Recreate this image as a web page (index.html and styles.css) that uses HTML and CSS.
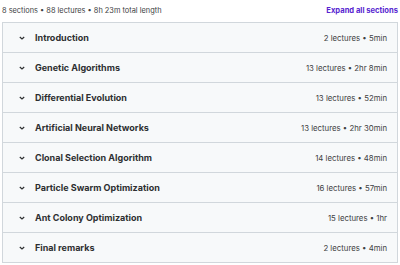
FILE: index.html
```html
<!DOCTYPE html>
<html lang="en">
<head>
    <meta charset="UTF-8">
    <title>Course content</title>
    <link rel="stylesheet" href="styles.css">
</head>
<body>
    <div class="content">
        <div class="summary">
            <span>8 sections • 88 lectures • 8h 23m total length</span>
            <span class="expand">Expand all sections</span>
        </div>
        <div class="sections">
            <div class="section">
                <svg class="chev" viewBox="0 0 10 10"><path d="M2.8 4 L5 6 L7.2 4"/></svg>
                <span class="title">Introduction</span>
                <span class="meta">2 lectures • 5min</span>
            </div>
            <div class="section">
                <svg class="chev" viewBox="0 0 10 10"><path d="M2.8 4 L5 6 L7.2 4"/></svg>
                <span class="title">Genetic Algorithms</span>
                <span class="meta">13 lectures • 2hr 8min</span>
            </div>
            <div class="section">
                <svg class="chev" viewBox="0 0 10 10"><path d="M2.8 4 L5 6 L7.2 4"/></svg>
                <span class="title">Differential Evolution</span>
                <span class="meta">13 lectures • 52min</span>
            </div>
            <div class="section">
                <svg class="chev" viewBox="0 0 10 10"><path d="M2.8 4 L5 6 L7.2 4"/></svg>
                <span class="title">Artificial Neural Networks</span>
                <span class="meta">13 lectures • 2hr 30min</span>
            </div>
            <div class="section">
                <svg class="chev" viewBox="0 0 10 10"><path d="M2.8 4 L5 6 L7.2 4"/></svg>
                <span class="title">Clonal Selection Algorithm</span>
                <span class="meta">14 lectures • 48min</span>
            </div>
            <div class="section">
                <svg class="chev" viewBox="0 0 10 10"><path d="M2.8 4 L5 6 L7.2 4"/></svg>
                <span class="title">Particle Swarm Optimization</span>
                <span class="meta">16 lectures • 57min</span>
            </div>
            <div class="section">
                <svg class="chev" viewBox="0 0 10 10"><path d="M2.8 4 L5 6 L7.2 4"/></svg>
                <span class="title">Ant Colony Optimization</span>
                <span class="meta">15 lectures • 1hr</span>
            </div>
            <div class="section">
                <svg class="chev" viewBox="0 0 10 10"><path d="M2.8 4 L5 6 L7.2 4"/></svg>
                <span class="title">Final remarks</span>
                <span class="meta">2 lectures • 4min</span>
            </div>
        </div>
    </div>
</body>
</html>
```

FILE: styles.css
```css
body {
    margin: 0;
    background-color: white;
    font-family: Inter, "Noto Sans", sans-serif;
    color: #2d2f31;
}

.content {
    padding: 2px 2px 0 2px;
}

.summary {
    display: flex;
    justify-content: space-between;
    align-items: center;
    height: 17px;
    font-size: 7.4px;
    color: #3e4143;
    padding-bottom: 3px;
}

.expand {
    color: #5624d0;
    font-weight: 700;
    font-size: 7.6px;
}

.sections {
    border: 1px solid #d1d7dc;
}

.section {
    display: flex;
    align-items: center;
    height: 29px;
    padding: 0 10px 0 14px;
    background-color: #f7f9fa;
    border-bottom: 1px solid #d1d7dc;
}

.section:last-child {
    border-bottom: none;
}

.chev {
    width: 10px;
    height: 10px;
    margin-right: 8px;
    fill: none;
    stroke: #2d2f31;
    stroke-width: 1.2;
}

.title {
    font-size: 9px;
    font-weight: 700;
    flex: 1;
}

.meta {
    font-size: 7.8px;
    color: #3e4143;
}
```
